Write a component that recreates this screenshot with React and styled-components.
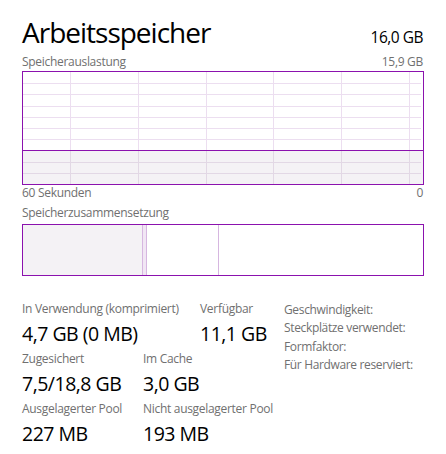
import React from "react";
import styled, { createGlobalStyle } from "styled-components";

const PURPLE = "#8b12ae";
const GRID = "#ecdef0";
const GRID_FILLED = "#e2d8e5";
const FILL = "#f4f2f5";
const SEPARATOR = "#d6b6e0";

const GlobalStyle = createGlobalStyle`
  html, body {
    margin: 0;
    background: #fff;
  }
  body {
    font-family: "Open Sans", "Noto Sans", sans-serif;
    color: #000;
  }
`;

const Panel = styled.div`
  width: 446px;
  height: 454px;
  box-sizing: border-box;
  padding: 14px 23px 0 22px;
  overflow: hidden;
`;

const Header = styled.div`
  display: flex;
  justify-content: space-between;
  align-items: baseline;
`;

const Title = styled.h1`
  margin: 0;
  font-size: 28px;
  font-weight: 400;
  line-height: 36px;
  letter-spacing: -1px;
`;

const Capacity = styled.span`
  font-size: 15.5px;
  line-height: 20px;
  letter-spacing: -0.5px;
`;

const Caption = styled.div`
  display: flex;
  justify-content: space-between;
  margin-top: ${(p) => p.$mt || 0}px;
  font-size: 12px;
  line-height: 16px;
  letter-spacing: -0.3px;
  color: #707070;
`;

const Chart = styled.svg`
  display: block;
  margin-top: ${(p) => p.$mt || 0}px;
`;

const Stats = styled.div`
  display: flex;
  margin-top: 25px;
`;

const StatColumn = styled.div`
  display: flex;
  flex-direction: column;
  width: 262px;
`;

const StatRow = styled.div`
  display: flex;
  height: 50px;
`;

const Stat = styled.div`
  width: ${(p) => p.$width}px;
  flex: none;
`;

const StatLabel = styled.div`
  font-size: 12px;
  line-height: 16px;
  letter-spacing: -0.3px;
  color: #707070;
  white-space: nowrap;
`;

const StatValue = styled.div`
  margin-top: 4px;
  font-size: 19.5px;
  line-height: 26px;
  letter-spacing: -0.5px;
  white-space: nowrap;
`;

const Specs = styled.div`
  display: flex;
  flex-direction: column;
`;

const SpecLabel = styled.div`
  font-size: 12px;
  line-height: 18.3px;
  letter-spacing: -0.35px;
  color: #707070;
  white-space: nowrap;
`;

const W = 402;
const H = 114;
const vLines = [48, 116, 184, 251, 319, 387];
const hLines = [1, 2, 3, 4, 5, 6, 8, 9].map((k) => Math.round(1 + 11.2 * k) + 0.5);
const level = 79.5;

function UsageGraph() {
  return (
    <Chart width={W} height={H} $mt={1}>
      <rect x="0" y="0" width={W} height={H} fill="#fff" />
      <rect x="1" y={level} width={W - 2} height={H - level - 1} fill={FILL} />
      {hLines.map((y) => (
        <line key={y} x1="1" x2={W - 3} y1={y} y2={y} stroke={y > level ? GRID_FILLED : GRID} />
      ))}
      {vLines.map((x) => (
        <React.Fragment key={x}>
          <line x1={x + 0.5} x2={x + 0.5} y1="1" y2={level} stroke={GRID} />
          <line x1={x + 0.5} x2={x + 0.5} y1={level} y2={H - 1} stroke={GRID_FILLED} />
        </React.Fragment>
      ))}
      <line x1="1" x2={W - 1} y1={level} y2={level} stroke={PURPLE} />
      <rect x="0.5" y="0.5" width={W - 1} height={H - 1} fill="none" stroke={PURPLE} />
    </Chart>
  );
}

function CompositionBar() {
  const h = 52;
  return (
    <Chart width={W} height={h} $mt={3}>
      <rect x="0" y="0" width={W} height={h} fill="#fff" />
      <rect x="1" y="1" width="119" height={h - 2} fill={FILL} />
      <rect x="121" y="1" width="3" height={h - 2} fill="#f1e6f4" />
      <line x1="120.5" x2="120.5" y1="1" y2={h - 1} stroke={SEPARATOR} />
      <line x1="124.5" x2="124.5" y1="1" y2={h - 1} stroke={SEPARATOR} />
      <line x1="196.5" x2="196.5" y1="1" y2={h - 1} stroke={SEPARATOR} />
      <rect x="0.5" y="0.5" width={W - 1} height={h - 1} fill="none" stroke={PURPLE} />
    </Chart>
  );
}

const rows = [
  [
    { label: "In Verwendung (komprimiert)", value: "4,7 GB (0 MB)", width: 178 },
    { label: "Verfügbar", value: "11,1 GB", width: 84 },
  ],
  [
    { label: "Zugesichert", value: "7,5/18,8 GB", width: 121 },
    { label: "Im Cache", value: "3,0 GB", width: 141 },
  ],
  [
    { label: "Ausgelagerter Pool", value: "227 MB", width: 121 },
    { label: "Nicht ausgelagerter Pool", value: "193 MB", width: 141 },
  ],
];

const specs = ["Geschwindigkeit:", "Steckplätze verwendet:", "Formfaktor:", "Für Hardware reserviert:"];

export default function App() {
  return (
    <>
      <GlobalStyle />
      <Panel>
        <Header>
          <Title>Arbeitsspeicher</Title>
          <Capacity>16,0 GB</Capacity>
        </Header>
        <Caption $mt={4}>
          <span>Speicherauslastung</span>
          <span>15,9 GB</span>
        </Caption>
        <UsageGraph />
        <Caption>
          <span>60 Sekunden</span>
          <span>0</span>
        </Caption>
        <Caption $mt={4}>
          <span>Speicherzusammensetzung</span>
        </Caption>
        <CompositionBar />
        <Stats>
          <StatColumn>
            {rows.map((row, i) => (
              <StatRow key={i}>
                {row.map((s) => (
                  <Stat key={s.label} $width={s.width}>
                    <StatLabel>{s.label}</StatLabel>
                    <StatValue>{s.value}</StatValue>
                  </Stat>
                ))}
              </StatRow>
            ))}
          </StatColumn>
          <Specs>
            {specs.map((s) => (
              <SpecLabel key={s}>{s}</SpecLabel>
            ))}
          </Specs>
        </Stats>
      </Panel>
    </>
  );
}
